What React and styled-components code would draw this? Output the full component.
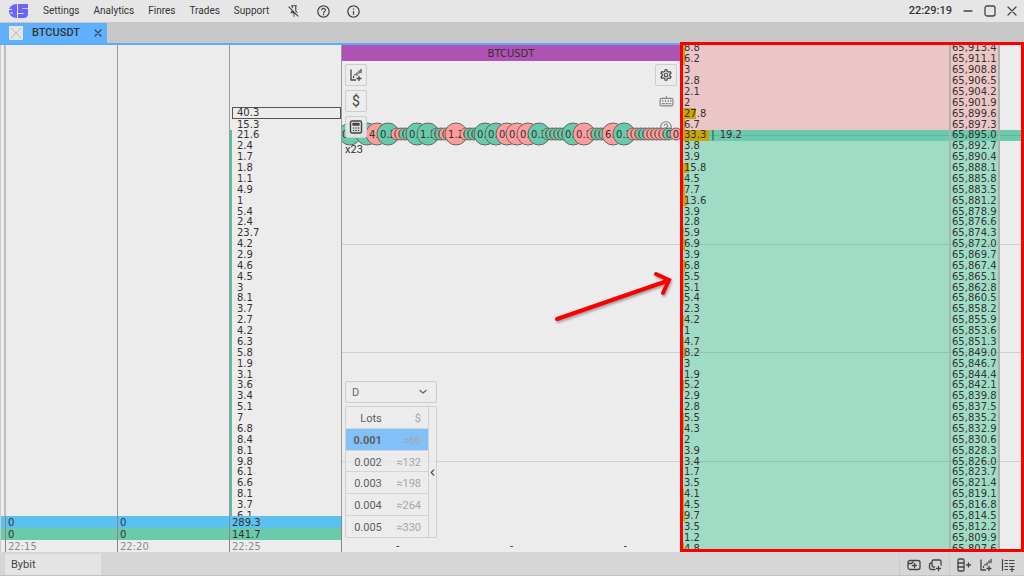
import React from 'react';
import styled, { createGlobalStyle, css } from 'styled-components';
import { MdHelpOutline, MdInfoOutline, MdOutlineSettings } from 'react-icons/md';

const ROWS = 47;
const BEST_ROW = 8;
const LEFT_START = 6;

const clusterVolumes = [
    '40.3', '15.3', '21.6', '2.4', '1.7', '1.8', '1.1', '4.9', '1', '5.4', '2.4', '23.7', '4.2',
    '2.9', '4.6', '4.5', '3', '8.1', '3.7', '2.7', '4.2', '6.3', '5.8', '1.9', '3.1', '3.6', '3.4',
    '5.1', '7', '6.8', '8.4', '8.1', '9.8', '6.1', '6.6', '8.1', '3.7', '6.1',
];

const bookVolumes = [
    '8.8', '6.2', '3', '2.8', '2.1', '2', '27.8', '6.7', '33.3', '3.8', '3.9', '15.8', '4.5', '7.7',
    '13.6', '3.9', '2.8', '5.9', '6.9', '3.9', '6.8', '5.5', '5.1', '5.4', '2.3', '4.2', '1', '4.7',
    '8.2', '3', '1.9', '5.2', '2.9', '2.8', '5.5', '4.3', '2', '3.9', '3.4', '1.7', '3.5', '4.1',
    '4.5', '9.7', '3.5', '1.2', '4.8',
];

const volumeBar = (value) => {
    const v = Number(value);
    if (v > 30) return 26;
    if (v > 20) return 13;
    if (v > 15) return 6;
    if (v > 10) return 4;
    if (v > 6) return 2;
    return v > 4 ? 1 : 0;
};

const priceAt = (index) =>
    (65913.4 - index * 2.3).toLocaleString('en-US', {
        minimumFractionDigits: 1,
        maximumFractionDigits: 1,
    });

const totals = [
    { time: '22:15', ask: '0', bid: '0' },
    { time: '22:20', ask: '0', bid: '0' },
    { time: '22:25', ask: '289.3', bid: '141.7' },
];

const lots = [
    { size: '0.001', usd: '≈66' },
    { size: '0.002', usd: '≈132' },
    { size: '0.003', usd: '≈198' },
    { size: '0.004', usd: '≈264' },
    { size: '0.005', usd: '≈330' },
];

// [centre, side, label], big ticks carry a label
const ticks = [
    [8, 'g', '0.2'], [25, 'g', '0.1'], [35, 'r', '4.1'], [46, 'g', '0.2'],
    [55, 'r'], [59, 'r'], [63, 'g'], [67, 'g'],
    [75, 'g', '0.1'], [86, 'g', '1.1'],
    [95, 'g'], [99, 'g'], [103, 'r'], [107, 'r'],
    [114, 'r', '1.2'],
    [124, 'r'], [128, 'g'], [132, 'g'], [136, 'g'],
    [143, 'g', '0.1'], [154, 'g', '0.2'], [165, 'r', '0.1'], [175, 'r', '0.3'],
    [186, 'r', '0.1'], [197, 'g', '0.3'],
    [206, 'g'], [210, 'g'], [214, 'g'], [218, 'g'], [222, 'g'],
    [231, 'g', '0.2'], [242, 'r', '0.1'],
    [251, 'r'], [255, 'g'], [259, 'g'], [263, 'g'],
    [271, 'r', '6.1'], [282, 'g', '0.1'],
    [291, 'r'], [295, 'r'], [299, 'g'], [303, 'g'], [307, 'r'], [311, 'r'],
    [315, 'r'], [319, 'r'], [323, 'r'], [327, 'g'], [334, 'r'],
];

const GlobalStyle = createGlobalStyle`
    *, *::before, *::after { box-sizing: border-box; }
    body {
        margin: 0;
        background: #ececec;
        color: #333;
        font-family: Roboto, 'Liberation Sans', sans-serif;
        font-size: 11px;
    }
    button, select, table { font: inherit; color: inherit; }
`;

const Page = styled.div`
    display: flex;
    flex-direction: column;
    height: 100vh;
    overflow: hidden;
`;

const PlainButton = styled.button`
    display: flex;
    align-items: center;
    justify-content: center;
    padding: 0;
    border: 0;
    background: none;
    color: #444;
`;

const TopBar = styled.header`
    display: flex;
    align-items: center;
    flex: none;
    height: 22px;
    padding: 0 7px 0 8px;
    background: #e6e6e6;
`;

const Menu = styled.nav`
    display: flex;
    gap: 14px;
    margin: 0 18px 0 14px;
`;

const MenuItem = styled.a`
    color: #333;
    text-decoration: none;
    font-size: 10px;
    line-height: 20px;
`;

const IconGroup = styled.div`
    display: flex;
    align-items: center;
    gap: 15px;
`;

const WindowGroup = styled.div`
    display: flex;
    align-items: center;
    gap: 11px;
    margin-left: auto;
`;

const Clock = styled.time`
    font-weight: 500;
    line-height: 22px;
`;

const TabBar = styled.div`
    display: flex;
    align-items: flex-end;
    flex: none;
    height: 23px;
    background: #c8c8c8;
    border-bottom: 2px solid #5aacfa;
`;

const Tab = styled.div`
    display: flex;
    align-items: center;
    width: 107px;
    height: 20px;
    padding: 0 4px 0 9px;
    background: #5fb0ff;
    font-weight: 500;
    line-height: 22px;
`;

const TabName = styled.span`
    flex: 1;
    padding-left: 9px;
`;

const Main = styled.main`
    display: grid;
    grid-template-columns: 342fr 338fr 344fr;
    flex: 1;
    min-height: 0;
    font-family: 'DejaVu Sans', sans-serif;
    font-size: 10px;
    line-height: 10px;
`;

const Ladder = styled.div`
    display: grid;
    grid-template-rows: repeat(${ROWS}, minmax(0, 1fr));
    height: calc(100% + 4px);
    margin-top: -2px;
`;

const gridLine = css`
    background-image: linear-gradient(rgba(90, 90, 90, 0.2), rgba(90, 90, 90, 0.2));
    background-size: 100% 1px;
    background-position: center;
    background-repeat: no-repeat;
`;

const ClusterPane = styled.section`
    position: relative;
    display: grid;
    grid-template-columns: 5px 1fr 1fr 1fr;
    min-height: 0;
    overflow: hidden;
    border-left: 1px solid #ccc;
`;

const ClusterColumn = styled.div`
    min-height: 0;
    overflow: hidden;
    border-right: 1px solid #999;

    &:first-child {
        border-right: 2px solid #bbb;
    }
`;

const ClusterRow = styled.div`
    display: flex;
    align-items: center;
    padding-left: 5px;
    border-left: 2px solid ${({ $filled }) => ($filled ? '#54c39d' : 'transparent')};
`;

const PeakRow = styled(ClusterRow)`
    margin: -1px 0 0 2px;
    padding-left: 4px;
    border: 1px solid #555;
`;

const Totals = styled.div`
    position: absolute;
    right: 0;
    bottom: 0;
    left: 0;
    display: grid;
    grid-template-columns: 5px 1fr 1fr 1fr;
    background: #ececec;
`;

const TotalColumn = styled.div`
    display: grid;
    grid-template-rows: 12px 12px 12px;
    border-right: 1px solid #888;
`;

const TotalCell = styled.span`
    padding-left: 2px;
    line-height: 14px;
    color: ${({ $tone }) => ($tone ? '#333' : '#8c8c8c')};
    background: ${({ $tone }) => $tone || '#ececec'};
`;

const ChartPane = styled.section`
    position: relative;
    min-height: 0;
    overflow: hidden;
`;

const ChartTitle = styled.h1`
    position: relative;
    height: 16px;
    margin: 0;
    background: #ae52b4;
    font-size: 10px;
    font-weight: 400;
    line-height: 18px;
    text-align: center;
`;

const ChartGrid = styled.div`
    position: absolute;
    inset: 0;
`;

const ChartRow = styled.div`
    ${({ $line }) => $line && gridLine}
`;

const Ticks = styled.svg`
    position: absolute;
    top: 77px;
    right: 0;
    width: 338px;
    height: 24px;
`;

const Tools = styled.div`
    position: absolute;
    top: 19px;
    ${({ $side }) => $side}: 3px;
    display: flex;
    flex-direction: column;
    gap: 4px;
`;

const Tool = styled(PlainButton)`
    width: 22px;
    height: 22px;
    border: 1px solid #cdcdcd;
    border-radius: 2px;
    background: rgba(236, 236, 236, 0.88);
    font: 14px Roboto, sans-serif;
    ${({ $faded }) => $faded && 'border-color: transparent; opacity: 0.6;'}
`;

const Multiplier = styled.span`
    font: 11px/16px Roboto, sans-serif;
`;

const Arrow = styled.svg`
    position: absolute;
    top: 220px;
    right: 2px;
    filter: drop-shadow(1px 2px 1px rgba(0, 0, 0, 0.3));
`;

const LotsPanel = styled.div`
    position: absolute;
    bottom: 14px;
    left: 3px;
    width: 92px;
    font: 11px Roboto, sans-serif;
    color: #666;
`;

const SelectBox = styled.label`
    position: relative;
    display: block;
    margin-bottom: 3px;

    svg {
        position: absolute;
        top: 7px;
        right: 10px;
        pointer-events: none;
    }
`;

const ModeSelect = styled.select`
    appearance: none;
    display: block;
    width: 100%;
    height: 22px;
    padding: 0 6px;
    border: 1px solid #ccc;
    border-radius: 2px;
    background: #ececec;
`;

const LotsBody = styled.div`
    display: flex;
    height: 132px;
    border: 1px solid #d0d0d0;
    border-radius: 2px;
    background: rgba(236, 236, 236, 0.75);
`;

const LotsTable = styled.table`
    flex: 1;
    height: 100%;
    border-collapse: collapse;
`;

const LotsRow = styled.tr`
    border-bottom: 1px solid #d4d4d4;
    background: ${({ $active }) => ($active ? '#82c0fa' : 'none')};

    &:last-child {
        border-bottom: 0;
    }
`;

const LotsCell = styled.td`
    padding: 2px 7px 0 0;
    font-weight: ${({ $bold }) => ($bold ? 700 : 400)};
    color: ${({ $muted }) => ($muted ? '#a6a6a6' : '#606060')};
    text-align: right;

    &:first-child {
        padding-right: 8px;
    }
`;

const Collapse = styled(PlainButton)`
    width: 8px;
    border-left: 1px solid #d0d0d0;
`;

const Dashes = styled.div`
    position: absolute;
    right: 0;
    bottom: 1px;
    left: 0;
    display: flex;
    justify-content: space-between;
    padding: 0 53px 0 54px;
`;

const BookPane = styled.section`
    position: relative;
    min-height: 0;
    padding: 0 3px;
`;

const BookClip = styled.div`
    height: 100%;
    overflow: hidden;
`;

const sideColor = { ask: '#ecc6c6', best: '#6bcaab', bid: '#a0dcc5' };

const BookRow = styled.div`
    display: grid;
    grid-template-columns: 1fr 51px 21px;
    background-color: ${({ $side }) => ($side === 'best' ? sideColor.best : '#ececec')};
    ${({ $line }) => $line && gridLine}
`;

const BookCell = styled.div`
    position: relative;
    display: flex;
    align-items: center;
    padding-left: 1px;
    background-color: ${({ $side }) => sideColor[$side]};
    ${({ $line }) => $line && gridLine}
`;

const PriceCell = styled(BookCell)`
    border-right: 2px solid #a9b3af;
    border-left: 2px solid #a9b3af;
`;

const VolumeBar = styled.i`
    position: absolute;
    top: 0;
    bottom: 0;
    left: 0;
    background: #c8a608;
`;

const Volume = styled.span`
    position: relative;
`;

const Divider = styled.span`
    margin: 0 5px;
`;

const Frame = styled.div`
    position: absolute;
    inset: -3px 0 0;
    border: 3px solid #fb0000;
    pointer-events: none;
`;

const StatusBar = styled.footer`
    display: flex;
    align-items: stretch;
    flex: none;
    height: 24px;
    padding: 2px 0 0 5px;
    background: #d6d6d6;
    border-bottom: 1px solid #c2c2c2;
`;

const Exchange = styled(PlainButton)`
    justify-content: flex-start;
    width: 96px;
    padding-left: 6px;
    background: #e4e4e4;
`;

const StatusTools = styled.div`
    display: flex;
    align-items: center;
    gap: 8px;
    padding: 0 9px 0 7px;
    border-left: 1px solid #cacaca;

    &:first-of-type {
        gap: 7px;
        margin-left: auto;
        padding: 0 7px;
    }
`;

const Line = ({ size = 14, box = 14, width = 1.3, children }) => (
    <svg
        width={size}
        height={size}
        viewBox={`0 0 ${box} ${box}`}
        fill="none"
        stroke="currentColor"
        strokeWidth={width}
        strokeLinecap="round"
        strokeLinejoin="round"
        aria-hidden="true"
    >
        {children}
    </svg>
);

const Logo = () => (
    <svg width="21" height="16" viewBox="0 0 21 16" fill="#6c63ff" aria-hidden="true">
        <path d="M9 1v14C4 15 1 12 1 8s3-7 8-7z" />
        <path d="M10 1h10v4h-5.500c-.8 0-.8 .7 0 .7H20V11c0 2.500-1.500 4-4 4h-6v-4h5c1 0 1-1 0-1h-5z" />
        <path d="M0 6.500h4M2 10h3" stroke="#e6e6e6" strokeWidth="1" />
    </svg>
);

const PinOff = () => (
    <svg width="14" height="14" viewBox="0 0 24 24" fill="currentColor" aria-hidden="true">
        <path d="M8,6.2V4H7V2H17V4H16V12L18,14V16H17.8L14,12.2V4H10V8.2L8,6.2M20,20.7L18.7,22L12.8,16.1V22H11.2V16H6V14L8,12V11.3L2,5.3L3.3,4L20,20.7M8.8,14H10.6L9.7,13.1L8.8,14Z" />
    </svg>
);

const ChartAdd = () => (
    <Line>
        <path d="M2 2v10h4.500M4.500 9.500v-1M6 7v-.5M8 5v2M10 3v2M12 1.500v3M8 10.500h4M10 8.500v4" />
    </Line>
);

const Calculator = () => (
    <Line width={1.4}>
        <rect x="1.500" y="1" width="11" height="12" rx="1.500" />
        <path d="M4 3.500h6v1.500H4zM4.500 8h.2M7 8h.2M9.500 8h.2M4.500 10.500h.2M7 10.500h.2M9.500 10.500h.2" />
    </Line>
);

const Keyboard = () => (
    <Line size={15} width={1.1}>
        <rect x="1" y="4" width="12" height="7" rx="1.500" />
        <path d="M7 4V2.500M3.500 6v1M6 6v1M8.500 6v1M11 6v1M3 9h2M6.500 9h2M10 9h1" />
    </Line>
);

const WidgetAdd = () => (
    <Line>
        <path d="M3 2.500h8a2 2 0 0 1 2 2v5a2 2 0 0 1-2 2H3a2 2 0 0 1-2-2v-5a2 2 0 0 1 2-2zM1 5.500h3.500L6 4M5.500 7.500h4M7.500 5.500v4" />
    </Line>
);

const WindowsAdd = () => (
    <Line>
        <path d="M6.500 9H5.500A1.500 1.500 0 0 1 4 7.500V3.500A1.500 1.500 0 0 1 5.500 2h6A1.500 1.500 0 0 1 13 3.500V7M4 5H3a1.500 1.500 0 0 0-1.500 1.500V10A1.500 1.500 0 0 0 3 11.500h4M8.500 10.500h4M10.500 8.500v4" />
    </Line>
);

const StackAdd = () => (
    <Line>
        <rect x="1" y="1" width="6" height="12" rx="1.200" />
        <path d="M1 5h6M1 9h6M9.500 7h4M11.500 5v4" />
    </Line>
);

const ListAdd = () => (
    <Line width={1.2}>
        <path d="M1.500 1.500v11M4 2.500h2.500M4 5.500h2.500M4 8.500h2.500M4 11.500h2.500M8.500 2.500h4.500M8.500 5.500h4.500M8.500 8.500h4.500M9 11.500h4M11 9.500v4" />
    </Line>
);

const Lots = () => (
    <LotsPanel>
        <SelectBox>
            <ModeSelect aria-label="Lot mode" defaultValue="D">
                <option>D</option>
            </ModeSelect>
            <Line size={8} box={8}>
                <path d="M1 2.500l3 2.500 3-2.500" />
            </Line>
        </SelectBox>
        <LotsBody>
            <LotsTable>
                <tbody>
                    <LotsRow>
                        <LotsCell as="th">Lots</LotsCell>
                        <LotsCell as="th" $muted>$</LotsCell>
                    </LotsRow>
                    {lots.map(({ size, usd }, i) => (
                        <LotsRow key={size} $active={i === 0}>
                            <LotsCell $bold={i === 0}>{size}</LotsCell>
                            <LotsCell $muted>{usd}</LotsCell>
                        </LotsRow>
                    ))}
                </tbody>
            </LotsTable>
            <Collapse aria-label="Collapse lots">
                <Line size={7} box={8}>
                    <path d="M5.500 1l-3 3 3 3" />
                </Line>
            </Collapse>
        </LotsBody>
    </LotsPanel>
);

const Clusters = () => (
    <ClusterPane>
        <ClusterColumn />
        <ClusterColumn />
        <ClusterColumn />
        <ClusterColumn>
            <Ladder>
                {Array.from({ length: ROWS }, (_, i) => {
                    const Row = i === LEFT_START ? PeakRow : ClusterRow;
                    return (
                        <Row key={i} $filled={i >= BEST_ROW}>
                            {clusterVolumes[i - LEFT_START]}
                        </Row>
                    );
                })}
            </Ladder>
        </ClusterColumn>
        <Totals>
            <TotalColumn>
                <TotalCell $tone="#5bc2ef" />
                <TotalCell $tone="#6bcaab" />
                <TotalCell />
            </TotalColumn>
            {totals.map(({ time, ask, bid }) => (
                <TotalColumn key={time}>
                    <TotalCell $tone="#5bc2ef">{ask}</TotalCell>
                    <TotalCell $tone="#6bcaab">{bid}</TotalCell>
                    <TotalCell>{time}</TotalCell>
                </TotalColumn>
            ))}
        </Totals>
    </ClusterPane>
);

const Chart = () => (
    <ChartPane>
        <ChartGrid>
            <Ladder>
                {Array.from({ length: ROWS }, (_, i) => (
                    <ChartRow key={i} $line={i % 10 === BEST_ROW} />
                ))}
            </Ladder>
        </ChartGrid>
        <ChartTitle>BTCUSDT</ChartTitle>
        <Tools $side="right">
            <Tool aria-label="Settings"><MdOutlineSettings size={14} /></Tool>
            <Tool aria-label="Hotkeys" $faded><Keyboard /></Tool>
            <Tool aria-label="Help" $faded><MdHelpOutline size={14} /></Tool>
        </Tools>
        <Ticks viewBox="0 0 338 24">
            {ticks.map(([x, side, label]) => (
                <g key={x}>
                    <circle
                        cx={x}
                        cy="12"
                        r={label ? 11 : 6}
                        fill={side === 'g' ? '#69caab' : '#ff9c9c'}
                        stroke="#666"
                    />
                    <text x={x} y="16" textAnchor="middle" fontSize="10" fill="#333">
                        {label || '0'}
                    </text>
                </g>
            ))}
        </Ticks>
        <Tools $side="left">
            <Tool aria-label="Add chart"><ChartAdd /></Tool>
            <Tool aria-label="Currency">$</Tool>
            <Tool aria-label="Calculator"><Calculator /></Tool>
            <Multiplier>x23</Multiplier>
        </Tools>
        <Arrow width="124" height="60" viewBox="0 0 124 60" fill="none" stroke="#fb0000" strokeWidth="4" strokeLinecap="round">
            <path d="M3 54L113 16M102 9l13 6-6 13" />
        </Arrow>
        <Lots />
        <Dashes>
            <span>-</span>
            <span>-</span>
            <span>-</span>
        </Dashes>
    </ChartPane>
);

const Book = () => (
    <BookPane>
        <BookClip>
            <Ladder>
                {bookVolumes.map((volume, i) => {
                    const side = i < BEST_ROW ? 'ask' : i === BEST_ROW ? 'best' : 'bid';
                    const line = i % 10 === BEST_ROW;
                    return (
                        <BookRow key={i} $side={side} $line={line}>
                            <BookCell $side={side} $line={line}>
                                <VolumeBar style={{ width: volumeBar(volume) }} />
                                <Volume>{volume}</Volume>
                                {side === 'best' && (
                                    <>
                                        <Divider>|</Divider>
                                        <Volume>19.2</Volume>
                                    </>
                                )}
                            </BookCell>
                            <PriceCell $side={side} $line={line}>{priceAt(i)}</PriceCell>
                        </BookRow>
                    );
                })}
            </Ladder>
        </BookClip>
        <Frame />
    </BookPane>
);

const App = () => (
    <Page>
        <GlobalStyle />
        <TopBar>
            <Logo />
            <Menu>
                {['Settings', 'Analytics', 'Finres', 'Trades', 'Support'].map((item) => (
                    <MenuItem key={item} href="#">{item}</MenuItem>
                ))}
            </Menu>
            <IconGroup>
                <PlainButton aria-label="Unpin"><PinOff /></PlainButton>
                <PlainButton aria-label="Help"><MdHelpOutline size={15} /></PlainButton>
                <PlainButton aria-label="About"><MdInfoOutline size={15} /></PlainButton>
            </IconGroup>
            <WindowGroup>
                <Clock>22:29:19</Clock>
                <PlainButton aria-label="Minimize">
                    <Line size={10} box={10}><path d="M1 5h8" /></Line>
                </PlainButton>
                <PlainButton aria-label="Maximize">
                    <Line size={12} box={12}><rect x="1" y="1" width="10" height="10" rx="2" /></Line>
                </PlainButton>
                <PlainButton aria-label="Close">
                    <Line size={10} box={10}><path d="M1 1l8 8M9 1l-8 8" /></Line>
                </PlainButton>
            </WindowGroup>
        </TopBar>
        <TabBar>
            <Tab>
                <svg width="14" height="14" viewBox="0 0 14 14" fill="#e6e6e6" stroke="#bbb" aria-hidden="true">
                    <rect width="14" height="14" stroke="none" />
                    <path d="M2 2l10 10M12 2L2 12" />
                </svg>
                <TabName>BTCUSDT</TabName>
                <PlainButton aria-label="Close tab">
                    <Line size={10} box={10}><path d="M2 2l6 6M8 2l-6 6" /></Line>
                </PlainButton>
            </Tab>
        </TabBar>
        <Main>
            <Clusters />
            <Chart />
            <Book />
        </Main>
        <StatusBar>
            <Exchange>Bybit</Exchange>
            <StatusTools>
                <PlainButton aria-label="Add widget"><WidgetAdd /></PlainButton>
                <PlainButton aria-label="Add window"><WindowsAdd /></PlainButton>
            </StatusTools>
            <StatusTools>
                <PlainButton aria-label="Add order book"><StackAdd /></PlainButton>
                <PlainButton aria-label="Add chart"><ChartAdd /></PlainButton>
                <PlainButton aria-label="Add list"><ListAdd /></PlainButton>
            </StatusTools>
        </StatusBar>
    </Page>
);

export default App;
